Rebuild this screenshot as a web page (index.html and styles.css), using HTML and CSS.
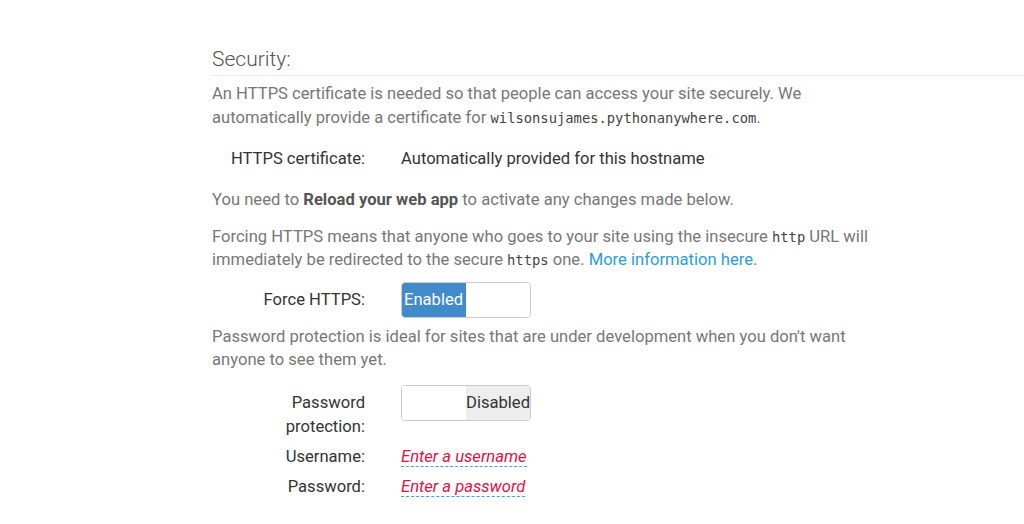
FILE: index.html
```html
<!DOCTYPE html>
<html>
<head>
<meta charset="utf-8">
<link rel="stylesheet" href="styles.css">
</head>
<body>
<div class="page">
  <h2 class="heading">Security:</h2>
  <p class="text t-cert">An HTTPS certificate is needed so that people can access your site securely. We automatically provide a certificate for <code>wilsonsujames.pythonanywhere.com</code>.</p>
  <div class="row row-cert">
    <div class="label">HTTPS certificate:</div>
    <div class="value">Automatically provided for this hostname</div>
  </div>
  <p class="text t-reload">You need to <b>Reload your web app</b> to activate any changes made below.</p>
  <p class="text t-force">Forcing HTTPS means that anyone who goes to your site using the insecure <code>http</code> URL will immediately be redirected to the secure <code>https</code> one. <a class="link" href="#">More information here</a>.</p>
  <div class="row row-switch">
    <div class="label">Force HTTPS:</div>
    <div class="value">
      <div class="switch">
        <span class="sw-on">Enabled</span><span class="sw-blank"></span>
      </div>
    </div>
  </div>
  <p class="text t-pass">Password protection is ideal for sites that are under development when you don't want anyone to see them yet.</p>
  <div class="row row-pp">
    <div class="label label-pp">Password<br>protection:</div>
    <div class="value">
      <div class="switch">
        <span class="sw-blank"></span><span class="sw-off">Disabled</span>
      </div>
    </div>
  </div>
  <div class="row row-field">
    <div class="label">Username:</div>
    <div class="value"><span class="editable">Enter a username</span></div>
  </div>
  <div class="row row-field">
    <div class="label">Password:</div>
    <div class="value"><span class="editable">Enter a password</span></div>
  </div>
</div>
</body>
</html>
```
FILE: styles.css
```css
html, body {
  margin: 0;
  padding: 0;
  background: #ffffff;
}
body {
  font-family: Roboto, "Liberation Sans", sans-serif;
  font-size: 16.6px;
  color: #777777;
}
.page {
  padding: 45px 0 0 212px;
}
.heading {
  margin: 0;
  font-weight: 300;
  font-size: 21px;
  line-height: 28px;
  color: #555555;
  padding-bottom: 2px;
  border-bottom: 1px solid #dceff8;
}
.text {
  margin: 4px 0 0 0;
  line-height: 23.5px;
  width: 680px;
}
code {
  font-family: "DejaVu Sans Mono", "Liberation Mono", monospace;
  font-size: 13.8px;
  line-height: 1;
  color: #444444;
}
b {
  color: #555555;
}
.link {
  color: #2a9fd6;
  text-decoration: none;
}
.row {
  display: flex;
  align-items: flex-start;
  gap: 36px;
  color: #333333;
}
.label {
  width: 153px;
  text-align: right;
  line-height: 24px;
}
.value {
  line-height: 24px;
}
.t-cert {
  margin-top: 6px;
}
.row-cert {
  margin-top: 18px;
}
.t-reload {
  margin-top: 17px;
}
.t-force {
  margin-top: 13px;
}
.row-switch {
  margin-top: 10px;
  align-items: center;
}
.t-pass {
  margin-top: 7px;
}
.row-pp {
  margin-top: 13px;
}
.label-pp {
  padding-top: 6px;
}
.switch {
  display: flex;
  width: 128px;
  height: 34px;
  border: 1px solid #cccccc;
  border-radius: 4px;
  overflow: hidden;
  line-height: 34px;
}
.sw-on {
  width: 64px;
  background: #428bca;
  color: #ffffff;
  padding-left: 2px;
  box-sizing: border-box;
}
.sw-blank {
  width: 64px;
  background: #ffffff;
}
.sw-off {
  width: 64px;
  background: #eeeeee;
  color: #333333;
  text-align: right;
}
.row-field {
  margin-top: 6px;
}
.editable {
  font-style: italic;
  color: #dd1144;
  border-bottom: 1px dashed #36a8e0;
}
```
